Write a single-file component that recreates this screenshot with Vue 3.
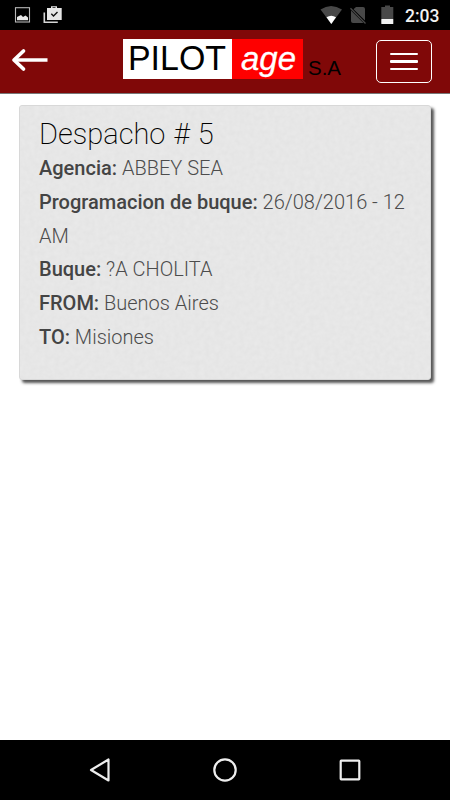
<template>
  <div class="screen">
    <div class="status-bar">
      <svg class="status-left" width="70" height="30" viewBox="0 0 70 30">
        <rect x="15.5" y="7.7" width="14" height="14.3" fill="none" stroke="#b8b8b8" stroke-width="1.1" />
        <path d="M17 20.3v-3.3l2-1 2-1 2 2 2.5-1.5 2.5 2v2.8z" fill="#e8e8e8" />
        <path d="M44.3 12.5v9.7h13.5" fill="none" stroke="#d5d5d5" stroke-width="1.6" />
        <path d="M47 8h4V6.2h6V8h4.7v12H47z" fill="#e6e6e6" />
        <path d="M52.5 8v-.7h3V8z" fill="#000" />
        <path d="M51.3 13.8l2.2 2.2 4-4" fill="none" stroke="#111" stroke-width="1.4" />
      </svg>
      <div class="status-right">
        <svg width="90" height="30" viewBox="0 0 90 30">
          <path d="M10.5 9.500Q21 2.500 32 9.500L21.300 24z" fill="#484848" />
          <path d="M16.5 17.300Q21.300 14.300 26 17.300L21.300 24z" fill="#fff" />
          <path d="M46 7h7q2 0 2 2v11.500L43.500 9.200zM41 10.500L53.500 23H43q-2 0-2-2z" fill="#484848" />
          <path d="M40.5 8.200l15 15.300" stroke="#484848" stroke-width="1.3" />
          <path d="M71.3 7H75V5.500h5V7h3.300v12H71.300z" fill="#484848" />
          <rect x="71.3" y="19" width="12" height="5" rx="0.5" fill="#f2f2f2" />
        </svg>
        <span class="clock">2:03</span>
      </div>
    </div>

    <header class="navbar">
      <button class="back-btn" title="Volver" @click="goBack">
        <svg width="38" height="26" viewBox="0 0 38 26">
          <path d="M3 13h33.500" stroke="#fff" stroke-width="3.3" />
          <path d="M12.500 4L3 13l9.500 9" fill="none" stroke="#fff" stroke-width="3.7" stroke-linecap="round" stroke-linejoin="round" />
        </svg>
      </button>
      <div class="brand">
        <svg width="222" height="44" viewBox="0 0 222 44">
          <rect x="0" y="0" width="109" height="40" fill="#fff" />
          <rect x="109" y="0" width="71" height="40" fill="#fe0000" />
          <text x="5" y="31" textLength="98" lengthAdjust="spacingAndGlyphs" class="brand-pilot">PILOT</text>
          <text x="118" y="31" textLength="55" lengthAdjust="spacingAndGlyphs" class="brand-age">age</text>
          <text x="185" y="36" textLength="33" lengthAdjust="spacingAndGlyphs" class="brand-sa">S.A</text>
        </svg>
      </div>
      <button class="menu-btn" title="Menu" @click="menuOpen = !menuOpen">
        <span class="bar"></span>
        <span class="bar"></span>
        <span class="bar"></span>
      </button>
    </header>

    <main class="content">
      <section class="card">
        <svg class="card-texture" width="100%" height="100%">
          <filter id="paper" x="0" y="0" width="100%" height="100%" color-interpolation-filters="sRGB">
            <feTurbulence type="fractalNoise" baseFrequency="0.2" numOctaves="2" seed="4" />
            <feColorMatrix values="0.03 0 0 0 0.889  0.03 0 0 0 0.889  0.03 0 0 0 0.889  0 0 0 0 1" />
          </filter>
          <rect width="100%" height="100%" filter="url(#paper)" />
        </svg>
        <div class="card-body">
          <h2 class="card-title">Despacho # {{ despacho.id }}</h2>
          <p v-for="field in despacho.fields" :key="field.label" class="field">
            <b>{{ field.label }}:</b> {{ field.value }}
          </p>
        </div>
      </section>
    </main>

    <nav class="system-nav">
      <svg width="24" height="26" viewBox="0 0 24 26">
        <path d="M20.5 2.500v21L3 13z" fill="none" stroke="#eee" stroke-width="2.2" stroke-linejoin="round" />
      </svg>
      <svg width="26" height="26" viewBox="0 0 26 26">
        <circle cx="13" cy="13" r="10.7" fill="none" stroke="#eee" stroke-width="2.2" />
      </svg>
      <svg width="24" height="26" viewBox="0 0 24 26">
        <rect x="2.7" y="3.7" width="18.6" height="18.6" rx="0.5" fill="none" stroke="#eee" stroke-width="2.2" />
      </svg>
    </nav>
  </div>
</template>

<script setup>
import { ref } from 'vue'

const menuOpen = ref(false)

const despacho = ref({
  id: 5,
  fields: [
    { label: 'Agencia', value: 'ABBEY SEA' },
    { label: 'Programacion de buque', value: '26/08/2016 - 12 AM' },
    { label: 'Buque', value: '?A CHOLITA' },
    { label: 'FROM', value: 'Buenos Aires' },
    { label: 'TO', value: 'Misiones' }
  ]
})

function goBack() {
  window.history.back()
}
</script>

<style>
body {
  margin: 0;
  background: #fff;
}
</style>

<style scoped>
.screen {
  height: 100vh;
  display: flex;
  flex-direction: column;
  overflow: hidden;
  background: #fff;
  font-family: Roboto, sans-serif;
}

.status-bar {
  height: 30px;
  flex: none;
  display: flex;
  justify-content: space-between;
  background: #000;
}

.status-right {
  display: flex;
  align-items: center;
}

.clock {
  width: 45px;
  padding-top: 2px;
  margin-left: 5px;
  color: #f2f2f2;
  font-size: 17.5px;
  line-height: 28px;
  font-weight: 500;
}

.navbar {
  height: 64px;
  flex: none;
  box-sizing: border-box;
  display: flex;
  align-items: flex-start;
  padding: 9px 18px 0 11px;
  background: #800808;
  border-bottom: 1px solid #777;
}

.back-btn {
  height: 42px;
  padding: 0;
  display: flex;
  align-items: center;
  border: none;
  background: none;
}

.brand {
  display: flex;
  margin-left: 74px;
}

.brand-pilot {
  font: 34.5px "Liberation Sans", Arial, sans-serif;
  fill: #000;
}

.brand-age {
  font: italic 33px "Liberation Sans", Arial, sans-serif;
  fill: #fff;
  stroke: #fff;
  stroke-width: 0.3px;
}

.brand-sa {
  font: 21px "Liberation Sans", Arial, sans-serif;
  fill: #000;
}

.menu-btn {
  width: 56px;
  height: 43px;
  margin-top: 1px;
  margin-left: auto;
  padding: 0;
  display: flex;
  flex-direction: column;
  align-items: center;
  justify-content: center;
  gap: 5px;
  border: 1.5px solid #fff;
  border-radius: 5px;
  background: none;
}

.bar {
  width: 28px;
  height: 2.5px;
  border-radius: 1px;
  background: #fff;
}

.content {
  flex: 1;
  padding: 11px 19px 0 19px;
}

.card {
  position: relative;
  height: 275px;
  box-sizing: border-box;
  border: 1px solid #d8d8d8;
  border-radius: 3px;
  background: #e6e6e6;
  box-shadow: 3px 3px 3px #555;
}

.card-texture {
  position: absolute;
  inset: 0;
  border-radius: 3px;
}

.card-body {
  position: relative;
  padding: 10px 19px;
}

.card-title {
  margin: 0;
  color: #000;
  font-size: 29px;
  font-weight: 200;
  line-height: 36px;
  word-spacing: 1px;
}

.field {
  margin: 0;
  color: #4c4c4c;
  font-size: 20px;
  font-weight: 300;
  line-height: 33.75px;
}

.field b {
  color: #444;
  font-weight: 500;
}

.system-nav {
  height: 60px;
  flex: none;
  box-sizing: border-box;
  display: flex;
  align-items: center;
  justify-content: space-between;
  padding: 0 88px;
  background: #000;
}
</style>
